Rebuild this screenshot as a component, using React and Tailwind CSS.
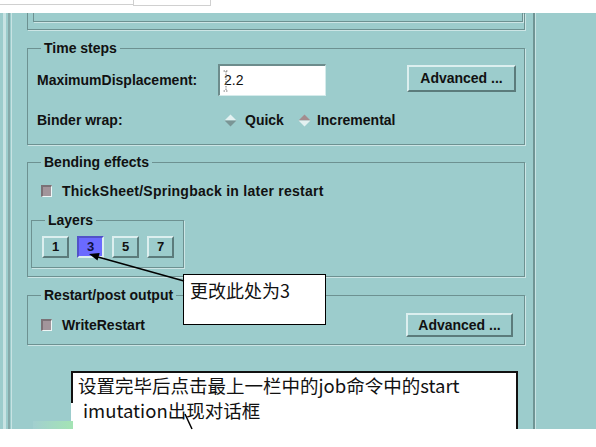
import React from 'react';

const groove = 'border border-[#6d9191] shadow-[1px_1px_0_#cce5e5]';
const raised =
  'border-2 border-t-[#dcefef] border-l-[#dcefef] border-b-[#5b7b7b] border-r-[#5b7b7b] bg-[#9ccccc]';

const Diamond = ({ selected }) => (
  <svg width="13" height="13" viewBox="0 0 13 13" className="shrink-0">
    <polygon points="0.5,6.5 6.5,0.5 12.5,6.5" fill={selected ? '#a48c8e' : '#e4f1f1'} />
    <polygon points="0.5,6.5 6.5,12.5 12.5,6.5" fill={selected ? '#e4f1f1' : '#7a9595'} />
  </svg>
);

const Check = () => (
  <div className="w-[11px] h-[12px] shrink-0 bg-[#a2959b] border-t-2 border-l-2 border-t-[#7b7176] border-l-[#7b7176] border-b border-r border-b-[#eef6f6] border-r-[#eef6f6]" />
);

const Legend = ({ children, className = '' }) => (
  <legend className={`px-[3px] text-[14px] leading-[14px] font-bold ${className}`}>{children}</legend>
);

export default function App() {
  const layers = ['1', '3', '5', '7'];

  return (
    <div className="relative w-[596px] h-[447px] overflow-hidden bg-white text-[#111] font-['Liberation_Sans',Arial,sans-serif]">
      {/* strip of the window above */}
      <div className="flex h-[13px] bg-white">
        <div className="w-[133px] h-[5px] border-b border-[#d0d0d0]" />
        <div className="w-[78px] h-[6px] border-x border-b border-[#d0d0d0]" />
      </div>

      <div className="flex h-[416px] bg-[#9ccccc]">
        <div className="w-[3px]" />
        <div className="w-[3px] bg-[#c8e3e3]" />
        <div className="w-[2px]" />
        <div className="w-[2px] bg-[#86a9a9]" />
        <div className="w-[1px]" />
        <div className="w-[1px] bg-[#c8e3e3]" />

        {/* main column */}
        <div className="w-[521px] pl-[15px] pr-[8px] flex flex-col">
          {/* bottom of the group above */}
          <div className="h-[17px] border-x border-b border-[#6d9191] shadow-[1px_1px_0_#cce5e5]">
            <div className="ml-[5px] mr-[1px] h-[9px] border-x border-b border-[#6d9191] shadow-[1px_1px_0_#cce5e5]" />
          </div>

          {/* Time steps */}
          <fieldset className={`mt-[11px] ${groove} pl-[9px] pr-[8px] pt-[9px] pb-[17px]`}>
            <Legend className="ml-[4px]">Time steps</Legend>
            <div className="flex items-center h-[32px] text-[14px] font-bold">
              <span className="w-[181px]">MaximumDisplacement:</span>
              <div className="relative w-[108px] h-[32px] bg-white border-t-2 border-l-2 border-t-[#6d8c8c] border-l-[#6d8c8c] border-b border-r border-b-[#d5ebeb] border-r-[#d5ebeb] flex items-center pl-[4px] font-normal">
                2.2
                <svg width="6" height="22" viewBox="0 0 6 22" className="absolute left-[3px] top-[4px]">
                  <path d="M0.5 1h5M3 1v20M0.5 21h5" stroke="#777" strokeWidth="1" strokeDasharray="1.5 1" fill="none" />
                </svg>
              </div>
              <button className={`ml-auto self-start mt-[1px] w-[109px] h-[27px] ${raised}`}>Advanced ...</button>
            </div>
            <div className="flex items-center h-[14px] mt-[17px] text-[14px] font-bold">
              <span className="w-[187px]">Binder wrap:</span>
              <Diamond />
              <span className="ml-[8px]">Quick</span>
              <span className="ml-[14px] flex">
                <Diamond selected />
              </span>
              <span className="ml-[6px]">Incremental</span>
            </div>
          </fieldset>

          {/* Bending effects */}
          <fieldset className={`mt-[10px] ${groove} pl-[3px] pt-[15px] pb-[8px]`}>
            <Legend className="ml-[10px]">Bending effects</Legend>
            <div className="ml-[10px] flex items-center h-[14px] gap-[10px] text-[14px] font-bold">
              <Check />
              <span className="tracking-[0.25px]">ThickSheet/Springback in later restart</span>
            </div>
            <fieldset className={`mt-[15px] w-[153px] ${groove} pl-[10px] pt-[9px] pb-[9px]`}>
              <Legend className="ml-[3px]">Layers</Legend>
              <div className="flex gap-[8px]">
                {layers.map((n) => (
                  <div
                    key={n}
                    className={`w-[27px] h-[22px] flex items-center justify-center text-[13px] font-bold ${
                      n === '3'
                        ? 'bg-[#6a6aff] text-[#101040] border-2 border-t-[#5252c8] border-l-[#5252c8] border-b-[#dcefef] border-r-[#dcefef]'
                        : raised
                    }`}
                  >
                    {n}
                  </div>
                ))}
              </div>
            </fieldset>
          </fieldset>

          {/* Restart/post output */}
          <fieldset className={`mt-[11px] ${groove} pl-[13px] pr-[11px] pt-[11px] pb-[7px]`}>
            <Legend>Restart/post output</Legend>
            <div className="flex items-center h-[24px] text-[14px] font-bold">
              <Check />
              <span className="ml-[10px]">WriteRestart</span>
              <button className={`ml-auto w-[107px] h-[24px] ${raised}`}>Advanced ...</button>
            </div>
          </fieldset>

          {/* note box */}
          <div className="relative mt-[26px] ml-[44px] w-[447px] flex-1 bg-white border-2 border-b-0 border-[#111] text-[18.5px] leading-[25px] font-['Noto_Sans_CJK_SC',sans-serif]">
            <div className="pl-[5px]">设置完毕后点击最上一栏中的job命令中的start</div>
            <div className="pl-[10px]">imutation出现对话框</div>
            <div className="absolute left-[-2px] top-[30px] w-[12px] h-[30px] bg-white" />
            <div className="absolute left-[-40px] top-[48px] w-[40px] h-[8px] bg-gradient-to-r from-[#a2cfcf] to-[#a4e4b4]" />
          </div>
        </div>

        <div className="w-[2px] bg-[#6f9494]" />
        <div className="w-[1px] bg-[#c8e3e3]" />
      </div>

      {/* callout */}
      <div className="absolute left-[183px] top-[274px] w-[143px] h-[51px] bg-white border border-black pl-[6px] pt-[3px] text-[18px] leading-[25px] font-['Noto_Sans_CJK_SC',sans-serif]">
        更改此处为3
      </div>

      <svg className="absolute left-0 top-0 pointer-events-none" width="596" height="447" viewBox="0 0 596 447">
        <line x1="184" y1="281" x2="98" y2="257" stroke="#000" strokeWidth="1.5" />
        <polygon points="89,254 99.7,252.9 97.5,260.6" fill="#000" />
        <line x1="185" y1="414" x2="192" y2="429" stroke="#000" strokeWidth="1.5" />
      </svg>
    </div>
  );
}
